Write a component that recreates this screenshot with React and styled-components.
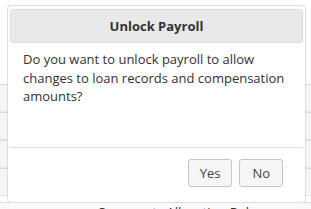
import React from "react";
import styled, { createGlobalStyle } from "styled-components";

const GlobalStyle = createGlobalStyle`
  html, body {
    margin: 0;
    padding: 0;
    background: #ffffff;
    font-family: "Open Sans", "Liberation Sans", sans-serif;
    overflow: hidden;
  }
`;

const Page = styled.div`
  position: relative;
  width: 311px;
  height: 209px;
  overflow: hidden;
  background: #ffffff;
`;

const Backdrop = styled.div`
  display: flex;
  flex-direction: column;
  padding-top: 84px;
`;

const BackRow = styled.div`
  height: 26px;
  background: #f5f5f5;
  border-top: 1px solid #d9d9d9;
  border-bottom: 1px solid #e6e6e6;
`;

const BottomRow = styled.div`
  height: 20px;
  margin-top: 6px;
  border-top: 1px solid #dcdcdc;
  background: #fafafa;
  padding-left: 97px;
  font-size: 13px;
  line-height: 18px;
  color: #333;
`;

const Dialog = styled.div`
  position: absolute;
  left: 7px;
  top: 5px;
  width: 299px;
  height: 198px;
  box-sizing: border-box;
  border: 1px solid #dddddd;
  border-radius: 4px;
  background: #ffffff;
  padding: 3px 2px;
  display: flex;
  flex-direction: column;
`;

const TitleBar = styled.div`
  height: 34px;
  box-sizing: border-box;
  border: 1px solid #dddddd;
  border-radius: 3px;
  background: #e9e9e9;
  display: flex;
  align-items: center;
  justify-content: center;
  font-size: 13px;
  font-weight: bold;
  color: #333333;
`;

const Content = styled.div`
  height: 104px;
  box-sizing: border-box;
  padding: 7px 13px 0 13px;
  font-size: 13px;
  line-height: 18.5px;
  color: #333333;
`;

const ButtonPane = styled.div`
  border-top: 1px solid #dddddd;
  display: flex;
  justify-content: flex-end;
  gap: 7px;
  padding: 11px 20px 0 0;
`;

const Button = styled.button`
  height: 28px;
  padding: 0 ${(props) => props.$pad}px;
  border: 1px solid #c5c5c5;
  border-radius: 3px;
  background: #f6f6f6;
  color: #454545;
  font-family: "Open Sans", "Liberation Sans", sans-serif;
  font-size: 13px;
  line-height: 26px;
  cursor: pointer;
`;

export default function App() {
  return (
    <Page>
      <GlobalStyle />
      <Backdrop>
        <BackRow />
        <BackRow />
        <BackRow />
        <BackRow />
        <BottomRow>Comments Allocation Rule</BottomRow>
      </Backdrop>
      <Dialog>
        <TitleBar>Unlock Payroll</TitleBar>
        <Content>
          Do you want to unlock payroll to allow changes to loan records and
          compensation amounts?
        </Content>
        <ButtonPane>
          <Button $pad={11}>Yes</Button>
          <Button $pad={12}>No</Button>
        </ButtonPane>
      </Dialog>
    </Page>
  );
}
